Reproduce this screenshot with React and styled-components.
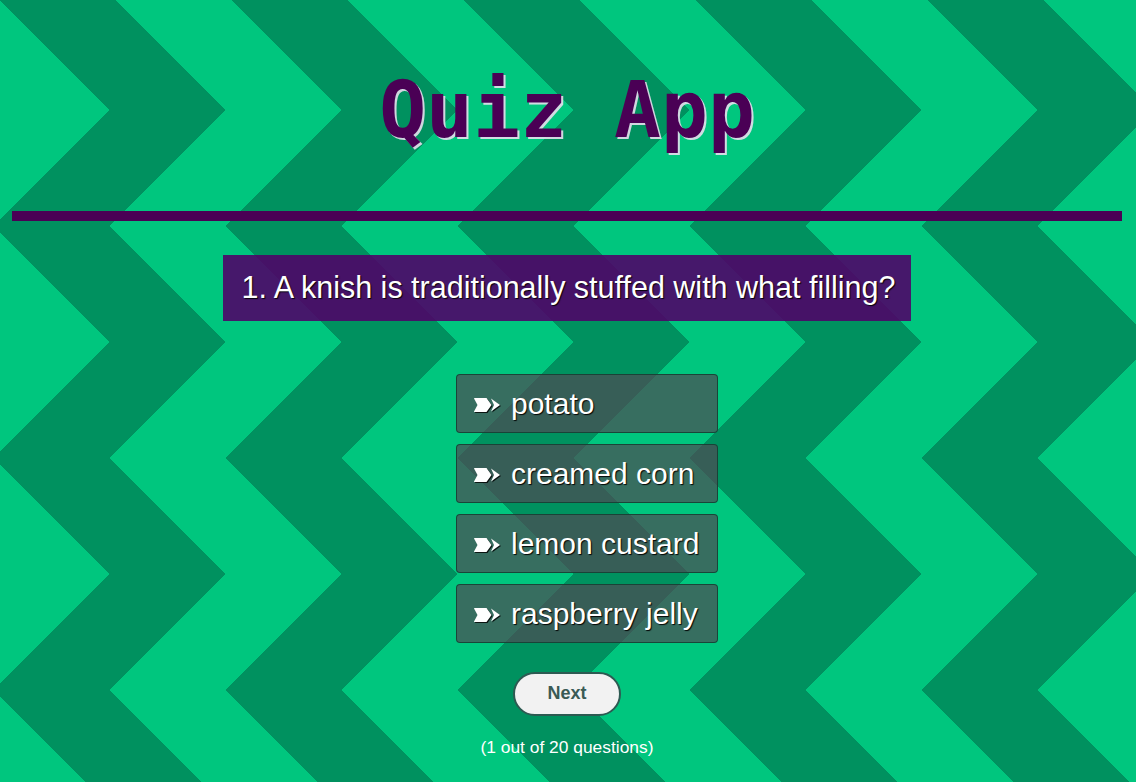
import React from "react";
import styled, { createGlobalStyle } from "styled-components";

const LIGHT = "#00C67E";
const DARK = "#00915F";
const PURPLE = "#4a0055";

const GlobalStyle = createGlobalStyle`
  html {
    background-color: ${DARK};
    background-image:
      conic-gradient(from 0deg at 116px 116px, transparent 0deg 225deg, ${LIGHT} 225deg 315deg, transparent 315deg),
      conic-gradient(from 0deg at 232px 116px, ${LIGHT} 0deg 225deg, transparent 225deg 315deg, ${LIGHT} 315deg);
    background-size: 232px 232px;
    background-position: -6px -6px;
    min-height: 100%;
  }
  body {
    margin: 0;
    font-family: "Liberation Sans", Arial, sans-serif;
  }
`;

const Page = styled.div`
  padding: 0 14px 0 12px;
`;

const Header = styled.header`
  display: flex;
  justify-content: center;
`;

const Title = styled.h1`
  margin: 64px 0 54px;
  font-family: "DejaVu Sans Mono", monospace;
  font-weight: bold;
  font-size: 78px;
  line-height: 93px;
  color: ${PURPLE};
  text-shadow: 2px 2px 0 rgba(232, 222, 238, 0.9);
`;

const Divider = styled.hr`
  margin: 0;
  border: none;
  height: 10px;
  background: ${PURPLE};
`;

const Main = styled.main`
  display: flex;
  flex-direction: column;
  align-items: center;
`;

const Question = styled.h2`
  margin: 34px 0 0;
  padding: 15px 16px 16px 19px;
  background: rgba(80, 0, 105, 0.88);
  color: #fff;
  font-weight: normal;
  font-size: 30.5px;
  line-height: 34.5px;
  white-space: nowrap;
  text-shadow: 1px 1px 1px rgba(0, 0, 0, 0.9);
`;

const AnswerList = styled.ul`
  list-style: none;
  margin: 53px 0 0;
  padding: 0 0 0 40px;
  display: flex;
  flex-direction: column;
  gap: 11px;
`;

const AnswerButton = styled.li`
  box-sizing: border-box;
  width: 262px;
  height: 59px;
  display: flex;
  align-items: center;
  gap: 10px;
  padding: 1px 15px 0 16px;
  border: 1px solid rgba(20, 62, 50, 0.85);
  border-radius: 4px;
  background: rgba(78, 72, 84, 0.7);
  color: #fff;
  font-size: 30px;
  line-height: 35px;
  white-space: nowrap;
  text-shadow: 1px 1px 1px rgba(0, 0, 0, 0.95);
  cursor: pointer;
`;

const ArrowIcon = styled.svg`
  flex: none;
  width: 28px;
  height: 16px;
  margin-top: 2px;
  filter: drop-shadow(1px 1px 0.5px rgba(0, 0, 0, 0.8));
`;

const NextButton = styled.button`
  margin-top: 29px;
  height: 44px;
  padding: 0 32px;
  border: 2px solid #2d5a52;
  border-radius: 22px;
  background: #f2f2f2;
  color: #3a5a55;
  font-family: "Liberation Sans", Arial, sans-serif;
  font-weight: bold;
  font-size: 18px;
  cursor: pointer;
`;

const Progress = styled.p`
  margin: 21px 0 0;
  color: #fff;
  font-size: 17.4px;
`;

const Arrow = () => (
  <ArrowIcon viewBox="0 0 28 16">
    <path
      d="M1 1.5 Q1 1 1.6 1 H13.5 L18.5 8 L13.5 15 H1.6 Q1 15 1 14.5 L4.5 8 Z"
      fill="#fff"
    />
    <path d="M18 1.5 L27 8 L18 14.5 L21 8 Z" fill="#fff" />
  </ArrowIcon>
);

const answers = ["potato", "creamed corn", "lemon custard", "raspberry jelly"];

export default function App() {
  return (
    <>
      <GlobalStyle />
      <Page>
        <Header>
          <Title>Quiz App</Title>
        </Header>
        <Divider />
        <Main>
          <Question>1. A knish is traditionally stuffed with what filling?</Question>
          <AnswerList>
            {answers.map((a) => (
              <AnswerButton key={a}>
                <Arrow />
                <span>{a}</span>
              </AnswerButton>
            ))}
          </AnswerList>
          <NextButton>Next</NextButton>
          <Progress>(1 out of 20 questions)</Progress>
        </Main>
      </Page>
    </>
  );
}
